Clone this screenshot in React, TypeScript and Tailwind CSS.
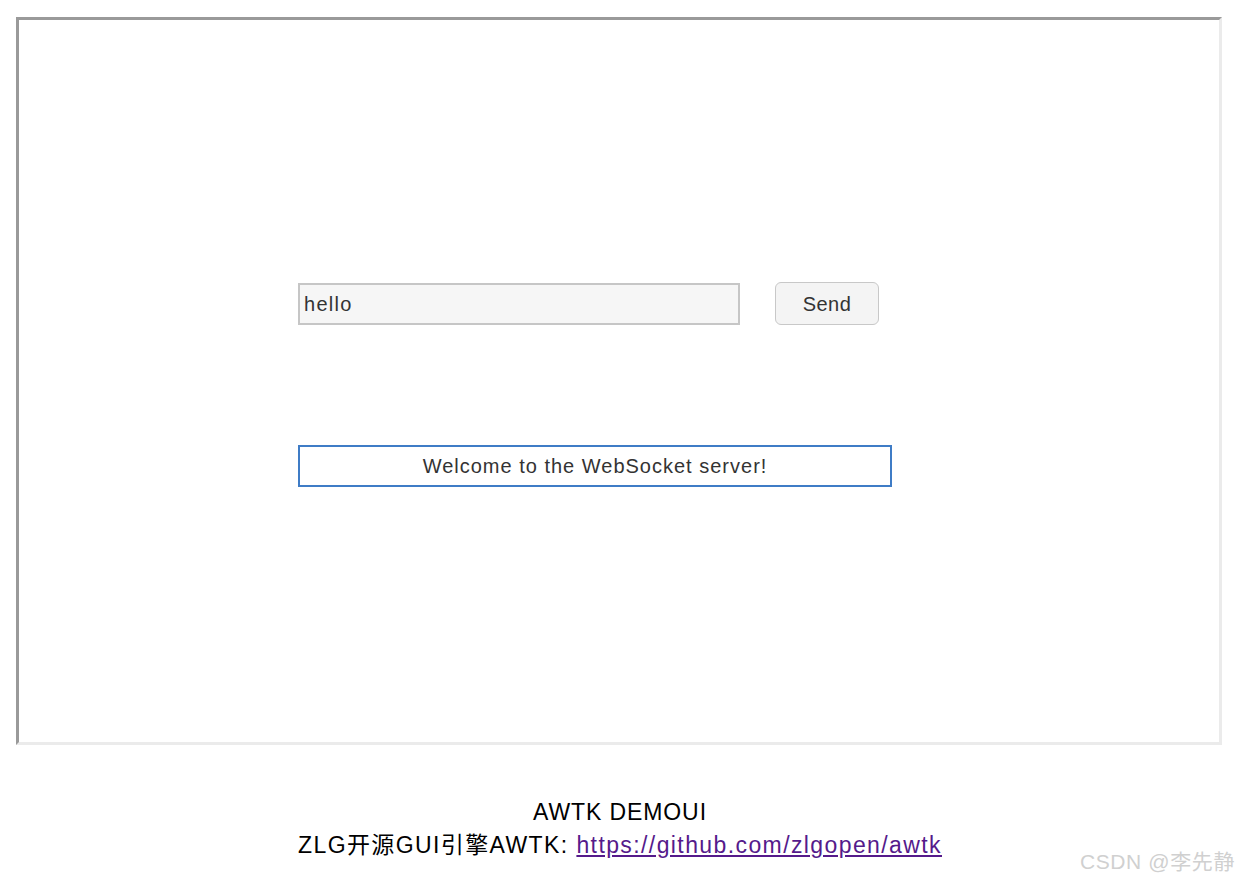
export default function App() {
  const font = { fontFamily: '"Liberation Sans", "Noto Sans CJK SC", sans-serif' };
  return (
    <div className="relative w-[1240px] h-[884px] bg-white" style={font}>
      <div className="pt-[17px] pl-[16px]">
        <div className="w-[1206px] h-[728px] border-[3px] border-t-[#9a9a9a] border-l-[#9a9a9a] border-r-[#ebebeb] border-b-[#ebebeb] bg-white pl-[279px] pt-[262px]">
          <div className="flex items-center gap-[35px]">
            <div className="w-[442px] h-[42px] border-2 border-[#c6c6c6] bg-[#f6f6f6] flex items-center pl-[4px] text-[20px] text-[#333] tracking-[1.3px]">
              hello
            </div>
            <button className="w-[104px] h-[43px] rounded-[6px] border border-[#c8c8c8] bg-[#f4f4f4] text-[20px] text-[#333] tracking-[0.5px]">
              Send
            </button>
          </div>
          <div className="mt-[120px] w-[594px] h-[42px] border-2 border-[#3f7cc6] flex items-center justify-center text-[20px] text-[#333] tracking-[1px]">
            Welcome to the WebSocket server!
          </div>
        </div>
      </div>
      <div className="mt-[51px] flex flex-col items-center text-[23px] leading-[33px] text-black">
        <div className="tracking-[0.9px]">AWTK DEMOUI</div>
        <div className="tracking-[1.4px]">
          ZLG开源GUI引擎AWTK:{" "}
          <a href="#" className="text-[#551a8b] underline">
            https://github.com/zlgopen/awtk
          </a>
        </div>
      </div>
      <div className="absolute right-[5px] bottom-[7px] text-[21px] text-[#d0d0d0] tracking-[0.6px]">CSDN @李先静</div>
    </div>
  );
}
